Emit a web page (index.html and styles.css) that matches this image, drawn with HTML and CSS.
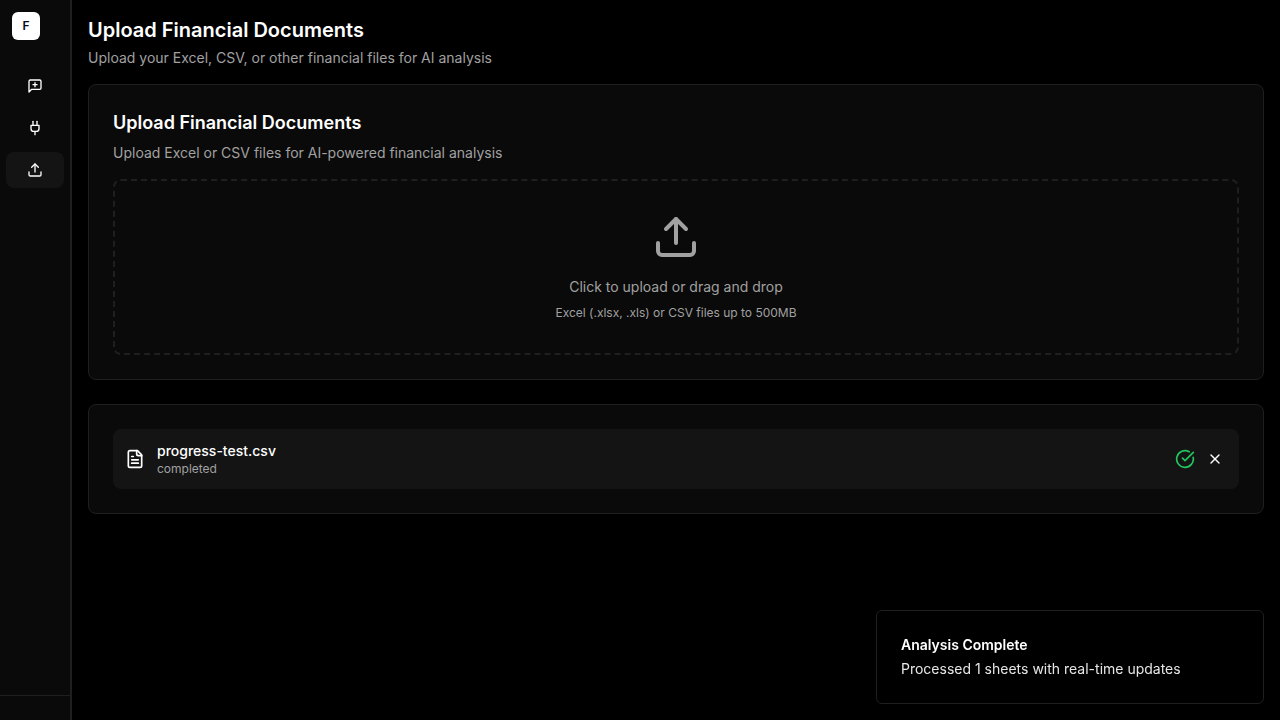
FILE: index.html
```html
<!DOCTYPE html>
<html lang="en">
<head>
<meta charset="utf-8">
<meta name="viewport" content="width=device-width, initial-scale=1">
<title>Upload Financial Documents</title>
<link rel="stylesheet" href="styles.css">
</head>
<body>
<div class="app">
  <aside class="sidebar">
    <div class="sidebar-header"><a class="logo" href="#" aria-label="Home">F</a></div>
    <nav class="nav" aria-label="Main">
      <a class="nav-item" href="#" aria-label="New chat">
        <svg class="icon icon-sm" viewBox="0 0 24 24"><path d="M21 15a2 2 0 0 1-2 2H7l-4 4V5a2 2 0 0 1 2-2h14a2 2 0 0 1 2 2z"/><path d="M12 7v6"/><path d="M9 10h6"/></svg>
      </a>
      <a class="nav-item" href="#" aria-label="Integrations">
        <svg class="icon icon-sm" viewBox="0 0 24 24"><path d="M12 22v-5"/><path d="M9 8V2"/><path d="M15 8V2"/><path d="M18 8v5a4 4 0 0 1-4 4h-4a4 4 0 0 1-4-4V8Z"/></svg>
      </a>
      <a class="nav-item active" href="#" aria-label="Upload" aria-current="page">
        <svg class="icon icon-sm" viewBox="0 0 24 24"><path d="M21 15v4a2 2 0 0 1-2 2H5a2 2 0 0 1-2-2v-4"/><path d="m17 8-5-5-5 5"/><path d="M12 3v12"/></svg>
      </a>
    </nav>
    <div class="sidebar-footer"></div>
  </aside>

  <main class="main">
    <header class="page-header">
      <h1 class="page-title">Upload Financial Documents</h1>
      <p class="muted">Upload your Excel, CSV, or other financial files for AI analysis</p>
    </header>

    <div class="cards">
      <section class="card">
        <div class="card-header">
          <h2 class="card-title">Upload Financial Documents</h2>
          <p class="muted">Upload Excel or CSV files for AI-powered financial analysis</p>
        </div>
        <button class="dropzone" type="button">
          <svg class="icon icon-lg" viewBox="0 0 24 24"><path d="M21 15v4a2 2 0 0 1-2 2H5a2 2 0 0 1-2-2v-4"/><path d="m17 8-5-5-5 5"/><path d="M12 3v12"/></svg>
          <span class="dropzone-label">Click to upload or drag and drop</span>
          <span class="dropzone-hint">Excel (.xlsx, .xls) or CSV files up to 500MB</span>
        </button>
      </section>

      <section class="card">
        <div class="file">
          <svg class="icon icon-md" viewBox="0 0 24 24"><path d="M15 2H6a2 2 0 0 0-2 2v16a2 2 0 0 0 2 2h12a2 2 0 0 0 2-2V7Z"/><path d="M14 2v4a2 2 0 0 0 2 2h4"/><path d="M10 9H8"/><path d="M16 13H8"/><path d="M16 17H8"/></svg>
          <div class="file-info">
            <p class="file-name">progress-test.csv</p>
            <p class="file-status">completed</p>
          </div>
          <div class="file-actions">
            <svg class="icon icon-md icon-success" viewBox="0 0 24 24"><path d="M21.801 10A10 10 0 1 1 17 3.335"/><path d="m9 11 3 3L22 4"/></svg>
            <button class="remove" type="button" aria-label="Remove file">
              <svg class="icon icon-sm" viewBox="0 0 24 24"><path d="M18 6 6 18"/><path d="m6 6 12 12"/></svg>
            </button>
          </div>
        </div>
      </section>
    </div>
  </main>
</div>

<div class="toast" role="status">
  <p class="toast-title">Analysis Complete</p>
  <p class="toast-text">Processed 1 sheets with real-time updates</p>
</div>
</body>
</html>
```

FILE: styles.css
```css
* {
  box-sizing: border-box;
  margin: 0;
}

body {
  background: #000;
  color: #fff;
  font-family: Inter, "Liberation Sans", sans-serif;
  font-size: 14px;
  line-height: 20px;
}

button {
  background: none;
  border: 0;
  color: inherit;
  font: inherit;
  cursor: pointer;
}

.app {
  display: flex;
  min-height: 100vh;
}

.sidebar {
  display: flex;
  flex-direction: column;
  flex: 0 0 72px;
  background: #0a0a0a;
  border-right: 2px solid #1f1f1f;
}

.sidebar-header {
  padding: 12px;
}

.logo {
  display: flex;
  align-items: center;
  justify-content: center;
  width: 28px;
  height: 28px;
  border-radius: 6px;
  background: #fff;
  color: #020617;
  font-size: 12px;
  font-weight: 600;
  text-decoration: none;
}

.nav {
  display: flex;
  flex: 1;
  flex-direction: column;
  gap: 6px;
  padding: 16px 6px;
}

.nav-item {
  display: flex;
  align-items: center;
  justify-content: center;
  height: 36px;
  border-radius: 8px;
  color: #fff;
}

.nav-item.active {
  background: #141414;
}

.sidebar-footer {
  height: 25px;
  border-top: 1px solid #1f1f1f;
}

.icon {
  display: block;
  flex: none;
  fill: none;
  stroke: currentColor;
  stroke-width: 2;
  stroke-linecap: round;
  stroke-linejoin: round;
}

.icon-sm {
  width: 16px;
  height: 16px;
}

.icon-md {
  width: 20px;
  height: 20px;
}

.icon-lg {
  width: 48px;
  height: 48px;
  margin-bottom: 16px;
}

.icon-success {
  color: #22c55e;
}

.main {
  flex: 1;
  min-width: 0;
  padding: 16px;
}

.page-header {
  display: grid;
  gap: 4px;
  margin-bottom: 16px;
}

.page-title {
  font-size: 20px;
  font-weight: 600;
  line-height: 28px;
}

.muted {
  color: #a1a1a1;
}

.cards {
  display: grid;
  gap: 24px;
}

.card {
  padding: 24px;
  border: 1px solid #1f1f1f;
  border-radius: 8px;
  background: #0a0a0a;
}

.card-header {
  display: grid;
  gap: 6px;
  margin-bottom: 16px;
}

.card-title {
  font-size: 18px;
  font-weight: 600;
  line-height: 28px;
}

.dropzone {
  display: flex;
  flex-direction: column;
  align-items: center;
  width: 100%;
  padding: 32px;
  border: 2px dashed #1f1f1f;
  border-radius: 8px;
  color: #a1a1a1;
}

.dropzone-label {
  margin-bottom: 8px;
}

.dropzone-hint,
.file-status {
  font-size: 12px;
  line-height: 16px;
}

.file {
  display: flex;
  align-items: center;
  gap: 12px;
  padding: 12px;
  border-radius: 8px;
  background: #141414;
}

.file-info {
  flex: 1;
  min-width: 0;
}

.file-name {
  font-weight: 500;
}

.file-status {
  color: #a1a1a1;
}

.file-actions {
  display: flex;
  align-items: center;
  gap: 8px;
}

.remove {
  padding: 4px;
}

.toast {
  position: fixed;
  right: 16px;
  bottom: 16px;
  display: grid;
  gap: 4px;
  width: 388px;
  max-width: calc(100vw - 32px);
  padding: 24px;
  border: 1px solid #1f1f1f;
  border-radius: 6px;
  background: #000;
  will-change: transform;
}

.toast-title {
  font-weight: 600;
}

.toast-text {
  opacity: 0.9;
}
```
